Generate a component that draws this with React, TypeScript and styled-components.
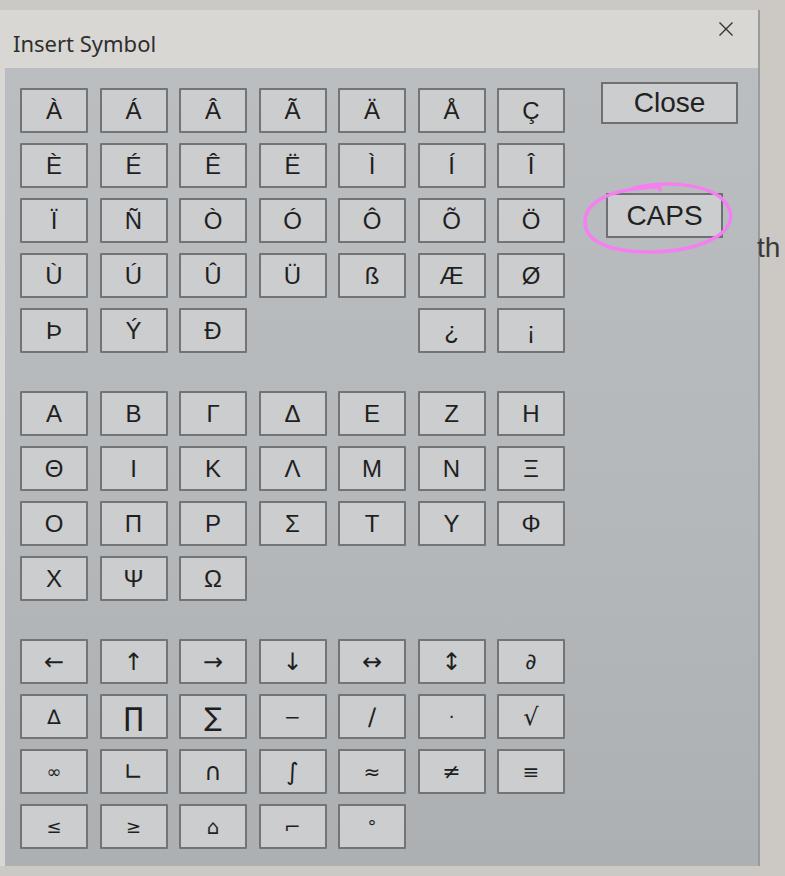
import React from "react";
import styled, { createGlobalStyle } from "styled-components";

const GlobalStyle = createGlobalStyle`
  html, body {
    margin: 0;
    padding: 0;
    background: #ccc9c5;
    font-family: "Liberation Sans", Arial, sans-serif;
  }
`;

const Page = styled.div`
  display: flex;
  align-items: flex-start;
  width: 785px;
  height: 876px;
  padding-top: 10px;
  box-sizing: border-box;
  overflow: hidden;
`;

const Dialog = styled.div`
  width: 760px;
  height: 856px;
  display: flex;
  flex-direction: column;
  background: #d9d7d4;
  border-right: 2px solid #9a9b9c;
  box-sizing: border-box;
  flex-shrink: 0;
`;

const TitleBar = styled.div`
  height: 58px;
  display: flex;
  align-items: center;
  justify-content: space-between;
  padding: 0 22px 0 13px;
  box-sizing: border-box;
  flex-shrink: 0;
`;

const Title = styled.div`
  font-family: "Noto Sans", "Open Sans", sans-serif;
  font-size: 22px;
  color: #2e2e2e;
  margin-top: 8px;
`;

const CloseX = styled.button`
  border: none;
  background: none;
  padding: 0;
  width: 20px;
  height: 20px;
  margin-top: -20px;
  display: flex;
  align-items: center;
  justify-content: center;
`;

const Body = styled.div`
  flex: 1;
  display: flex;
  gap: 36px;
  margin-left: 5px;
  padding: 20px 0 0 15px;
  background: linear-gradient(180deg, #babec1 0%, #b4b8bb 55%, #adb0b3 100%);
`;

const Sections = styled.div`
  display: flex;
  flex-direction: column;
  gap: 38px;
`;

const Grid = styled.div`
  display: grid;
  grid-template-columns: repeat(7, 68px);
  grid-auto-rows: 45px;
  column-gap: 11.5px;
  row-gap: 10px;
`;

const SymbolButton = styled.button<{ $size: number; $font: string }>`
  margin: 0;
  padding: 0;
  width: 68px;
  height: 45px;
  box-sizing: border-box;
  background: #cbcdce;
  border: 2px solid #727476;
  border-radius: 1px;
  font-family: ${(p) => p.$font};
  font-size: ${(p) => p.$size}px;
  color: #1f1f1f;
  display: flex;
  align-items: center;
  justify-content: center;
  line-height: 1;
`;

const Empty = styled.div``;

const SideColumn = styled.div`
  display: flex;
  flex-direction: column;
  align-items: flex-start;
  margin-top: -6px;
`;

const ActionButton = styled.button<{ $w: number; $h: number; $ml: number }>`
  margin: 0 0 0 ${(p) => p.$ml}px;
  padding: 0;
  width: ${(p) => p.$w}px;
  height: ${(p) => p.$h}px;
  box-sizing: border-box;
  background: #cbcdce;
  border: 2px solid #6e7072;
  font-family: "Liberation Sans", Arial, sans-serif;
  font-size: 28px;
  color: #222;
  display: flex;
  align-items: center;
  justify-content: center;
`;

const CapsWrap = styled.div`
  position: relative;
  margin-top: 69px;
`;

const Annotation = styled.svg`
  position: absolute;
  left: -19px;
  top: -12px;
  width: 152px;
  height: 74px;
  overflow: visible;
  pointer-events: none;
`;

const Behind = styled.div`
  flex: 1;
  padding-top: 222px;
  font-family: "Liberation Sans", Arial, sans-serif;
  font-size: 28px;
  color: #3a3a3a;
  overflow: hidden;
  white-space: nowrap;
  margin-left: -3px;
`;

type Cell = { c: string; s?: number } | null;

const SANS = `"Liberation Sans", Arial, sans-serif`;
const MATH = `"DejaVu Sans", "Liberation Sans", sans-serif`;

const L = (list: (string | null)[]): Cell[] => list.map((c) => (c === null ? null : { c }));

const latin: Cell[] = L([
  "À", "Á", "Â", "Ã", "Ä", "Å", "Ç",
  "È", "É", "Ê", "Ë", "Ì", "Í", "Î",
  "Ï", "Ñ", "Ò", "Ó", "Ô", "Õ", "Ö",
  "Ù", "Ú", "Û", "Ü", "ß", "Æ", "Ø",
  "Þ", "Ý", "Ð", null, null, "¿", "¡",
]);

const greek: Cell[] = L([
  "Α", "Β", "Γ", "Δ", "Ε", "Ζ", "Η",
  "Θ", "Ι", "Κ", "Λ", "Μ", "Ν", "Ξ",
  "Ο", "Π", "Ρ", "Σ", "Τ", "Υ", "Φ",
  "Χ", "Ψ", "Ω",
]);

const math: Cell[] = [
  { c: "←", s: 24 }, { c: "↑", s: 24 }, { c: "→", s: 24 }, { c: "↓", s: 24 },
  { c: "↔", s: 24 }, { c: "↕", s: 24 }, { c: "∂", s: 22 },
  { c: "∆", s: 20 }, { c: "∏", s: 26 }, { c: "∑", s: 26 }, { c: "−", s: 20 },
  { c: "∕", s: 24 }, { c: "·", s: 18 }, { c: "√", s: 24 },
  { c: "∞", s: 18 }, { c: "∟", s: 24 }, { c: "∩", s: 24 }, { c: "∫", s: 24 },
  { c: "≈", s: 20 }, { c: "≠", s: 22 }, { c: "≡", s: 20 },
  { c: "≤", s: 18 }, { c: "≥", s: 18 }, { c: "⌂", s: 20 }, { c: "⌐", s: 20 }, { c: "°", s: 18 },
];

function SymbolGrid({ cells, size, font }: { cells: Cell[]; size: number; font: string }) {
  return (
    <Grid>
      {cells.map((cell, i) =>
        cell === null ? (
          <Empty key={i} />
        ) : (
          <SymbolButton key={i} $size={cell.s ?? size} $font={font}>
            {cell.c}
          </SymbolButton>
        )
      )}
    </Grid>
  );
}

export default function App() {
  return (
    <>
      <GlobalStyle />
      <Page>
        <Dialog>
          <TitleBar>
            <Title>Insert Symbol</Title>
            <CloseX aria-label="close">
              <svg width="16" height="16" viewBox="0 0 16 16">
                <path d="M1.5 1.5 L14.5 14.5 M14.5 1.5 L1.5 14.5" stroke="#333" strokeWidth="1.4" fill="none" />
              </svg>
            </CloseX>
          </TitleBar>
          <Body>
            <Sections>
              <SymbolGrid cells={latin} size={24} font={SANS} />
              <SymbolGrid cells={greek} size={24} font={SANS} />
              <SymbolGrid cells={math} size={20} font={MATH} />
            </Sections>
            <SideColumn>
              <ActionButton $w={137} $h={42} $ml={0}>Close</ActionButton>
              <CapsWrap>
                <ActionButton $w={117} $h={45} $ml={5}>CAPS</ActionButton>
                <Annotation viewBox="0 0 152 74">
                  <path
                    d="M52 7 C 90 -2, 140 4, 148 30 C 154 52, 120 70, 70 71 C 28 72, 2 60, 3 40 C 4 20, 30 9, 62 7 C 72 6, 80 5, 78 9"
                    stroke="#f57ff0"
                    strokeWidth="3.5"
                    fill="none"
                    strokeLinecap="round"
                  />
                </Annotation>
              </CapsWrap>
            </SideColumn>
          </Body>
        </Dialog>
        <Behind>th</Behind>
      </Page>
    </>
  );
}
